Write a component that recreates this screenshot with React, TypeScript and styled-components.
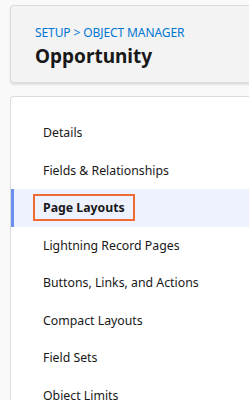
import React from "react";
import styled, { createGlobalStyle } from "styled-components";

const GlobalStyle = createGlobalStyle`
  body {
    margin: 0;
    background: #f9f9f9;
    font-family: "Noto Sans", "Open Sans", sans-serif;
  }
`;

const Page = styled.div`
  width: 249px;
  height: 400px;
  overflow: hidden;
  padding: 5px 0 0 10px;
  box-sizing: border-box;
  display: flex;
  flex-direction: column;
  gap: 13px;
`;

const HeaderCard = styled.header`
  flex-shrink: 0;
  width: 260px;
  height: 78px;
  box-sizing: border-box;
  background: #f3f3f3;
  border: 1px solid #dddbda;
  border-right: none;
  border-radius: 4px 0 0 4px;
  box-shadow: 0 2px 2px rgba(0, 0, 0, 0.1);
  padding: 19px 0 0 24px;
`;

const Breadcrumb = styled.div`
  font-size: 12px;
  line-height: 16px;
  color: #0176d3;
  letter-spacing: -0.1px;
`;

const Title = styled.h1`
  margin: 2px 0 0;
  font-size: 19px;
  line-height: 26px;
  font-weight: 700;
  color: #181818;
`;

const NavCard = styled.nav`
  flex-shrink: 0;
  width: 260px;
  height: 320px;
  background: #fff;
  border: 1px solid #dddbda;
  border-right: none;
  border-radius: 4px 0 0 0;
  padding-top: 17px;
`;

const NavItem = styled.div<{ $active?: boolean }>`
  height: 37.5px;
  display: flex;
  align-items: center;
  padding-left: 32px;
  font-size: 12.3px;
  color: #181818;
  background: ${(p) => (p.$active ? "#eef1fe" : "transparent")};
  box-shadow: ${(p) => (p.$active ? "inset 3px 0 0 #6a8ff0" : "none")};
`;

const Highlight = styled.span`
  margin-left: -10px;
  padding: 3px 8px;
  border: 2px solid #f06a35;
  font-weight: 700;
`;

const items = [
  "Details",
  "Fields & Relationships",
  "Page Layouts",
  "Lightning Record Pages",
  "Buttons, Links, and Actions",
  "Compact Layouts",
  "Field Sets",
  "Object Limits",
];

export default function App() {
  return (
    <>
      <GlobalStyle />
      <Page>
        <HeaderCard>
          <Breadcrumb>SETUP &gt; OBJECT MANAGER</Breadcrumb>
          <Title>Opportunity</Title>
        </HeaderCard>
        <NavCard>
          {items.map((item) =>
            item === "Page Layouts" ? (
              <NavItem key={item} $active>
                <Highlight>{item}</Highlight>
              </NavItem>
            ) : (
              <NavItem key={item}>{item}</NavItem>
            )
          )}
        </NavCard>
      </Page>
    </>
  );
}
